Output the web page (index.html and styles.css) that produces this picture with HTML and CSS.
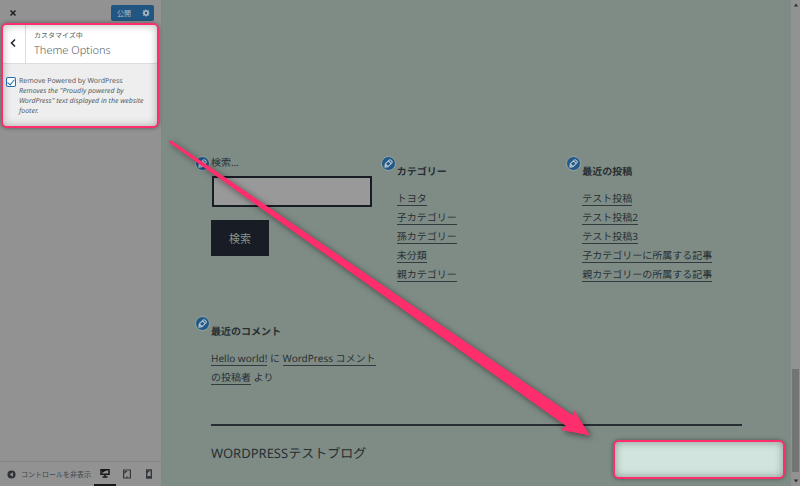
FILE: index.html
```html
<!DOCTYPE html>
<html lang="ja">
<head>
    <meta charset="UTF-8">
    <meta name="viewport" content="width=device-width, initial-scale=1.0">
    <title>カスタマイズ: WORDPRESSテストブログ</title>
    <link rel="stylesheet" href="styles.css">
</head>
<body>
    <svg class="symbols" aria-hidden="true">
        <symbol id="pencil" viewBox="0 0 20 20">
            <path fill="none" stroke="currentColor" stroke-width="2.500" stroke-linejoin="round" d="M2 18l1-7 9-9q2-1 4.500 1.500T18 8l-9 9zM10 4l6 6M3 11l6 6"/>
        </symbol>
    </svg>
    <div class="customizer">
        <aside class="sidebar">
            <header class="topbar">
                <button class="close" aria-label="閉じる">
                    <svg viewBox="0 0 8 8"><path d="M1.500 1.500l5 5M6.500 1.500l-5 5"/></svg>
                </button>
                <div class="publish">
                    <button class="save">公開</button>
                    <button class="settings" aria-label="公開設定">
                        <svg viewBox="0 0 20 20"><circle cx="10" cy="10" r="5" fill="none" stroke="currentColor" stroke-width="4"/><path fill="none" stroke="currentColor" stroke-width="3" d="M10 1v4M10 15v4M1 10h4M15 10h4M3.600 3.600l3 3M13.400 13.400l3 3M3.600 16.400l3-3M13.400 6.600l3-3"/></svg>
                    </button>
                </div>
            </header>
            <section class="options">
                <div class="options-head">
                    <button class="back" aria-label="戻る">
                        <svg viewBox="0 0 8 10"><path d="M6 1.500L2.500 5 6 8.500"/></svg>
                    </button>
                    <div class="options-title">
                        <span>カスタマイズ中</span>
                        <h1>Theme Options</h1>
                    </div>
                </div>
                <div class="control">
                    <input type="checkbox" id="remove-powered" checked>
                    <div>
                        <label for="remove-powered">Remove Powered by WordPress</label>
                        <p>Removes the "Proudly powered by WordPress" text displayed in the website footer.</p>
                    </div>
                </div>
            </section>
            <footer class="devices">
                <button class="collapse">
                    <svg viewBox="0 0 10 10"><circle cx="5" cy="5" r="4.500" fill="#30343a"/><path fill="#929292" d="M6.500 2.500v5L3 5z"/></svg>
                    <span>コントロールを非表示</span>
                </button>
                <button class="device active" aria-label="デスクトップ">
                    <svg viewBox="0 0 10 10"><path fill="none" stroke="currentColor" stroke-width="1.500" d="M1 1.700h8v4.600H1zM5 6v3M2.500 9h5"/><path fill="currentColor" d="M2 2h5L2 5z"/></svg>
                </button>
                <button class="device" aria-label="タブレット">
                    <svg viewBox="0 0 10 10"><path fill="none" stroke="currentColor" stroke-width="1.200" d="M1.600 1h6.800v8H1.600z"/><path fill="currentColor" d="M2.500 2h3l-3 3zM4.300 7.500h1.400v1.500H4.300z"/></svg>
                </button>
                <button class="device" aria-label="スマートフォン">
                    <svg viewBox="0 0 10 10"><path fill="none" stroke="currentColor" stroke-width="1.400" d="M2.700 1h4.600v8H2.700z"/><path fill="currentColor" d="M3 2h3L3 4.500zM3 7h4v2H3z"/></svg>
                </button>
            </footer>
        </aside>

        <main class="preview">
            <div class="widgets">
                <section class="widget">
                    <button class="edit" aria-label="編集"><svg><use href="#pencil"/></svg></button>
                    <form class="search">
                        <label for="s">検索…</label>
                        <input type="search" id="s">
                        <button type="button">検索</button>
                    </form>
                </section>
                <section class="widget">
                    <button class="edit" aria-label="編集"><svg><use href="#pencil"/></svg></button>
                    <h2>カテゴリー</h2>
                    <ul>
                        <li><a href="#">トヨタ</a></li>
                        <li><a href="#">子カテゴリー</a></li>
                        <li><a href="#">孫カテゴリー</a></li>
                        <li><a href="#">未分類</a></li>
                        <li><a href="#">親カテゴリー</a></li>
                    </ul>
                </section>
                <section class="widget">
                    <button class="edit" aria-label="編集"><svg><use href="#pencil"/></svg></button>
                    <h2>最近の投稿</h2>
                    <ul>
                        <li><a href="#">テスト投稿</a></li>
                        <li><a href="#">テスト投稿2</a></li>
                        <li><a href="#">テスト投稿3</a></li>
                        <li><a href="#">子カテゴリーに所属する記事</a></li>
                        <li><a href="#">親カテゴリーの所属する記事</a></li>
                    </ul>
                </section>
                <section class="widget">
                    <button class="edit" aria-label="編集"><svg><use href="#pencil"/></svg></button>
                    <h2>最近のコメント</h2>
                    <ul class="comments">
                        <li><a href="#">Hello world!</a> に <a href="#">WordPress コメントの投稿者</a> より</li>
                    </ul>
                </section>
            </div>
            <footer class="site-footer">WORDPRESSテストブログ</footer>
            <div class="marker"></div>
        </main>

        <div class="scrollbar">
            <svg viewBox="0 0 8 8"><path d="M4 2l3 4H1z"/></svg>
            <div class="thumb"></div>
            <svg viewBox="0 0 8 8"><path d="M4 6l3-4H1z"/></svg>
        </div>

        <svg class="arrow" viewBox="0 0 800 486" aria-hidden="true">
            <path d="M169 140.500L172 141 573 415.500 574 410 590 435.500 561 430 566 426 169 142.500z"/>
        </svg>
    </div>
</body>
</html>
```
FILE: styles.css
```css
* { box-sizing: border-box; }
body { margin: 0; font-family: "Noto Sans", "Noto Sans CJK JP", sans-serif; font-size: 10px; color: #282f33; text-rendering: geometricPrecision; }
button { border: 0; padding: 0; background: none; font: inherit; color: inherit; cursor: pointer; }
h1, h2, p, ul { margin: 0; padding: 0; }
.symbols { position: absolute; width: 0; height: 0; }
.customizer { position: relative; display: flex; height: 100vh; overflow: hidden; }

/* Sidebar */
.sidebar { flex: 0 0 162px; display: flex; flex-direction: column; background: #929292; border-right: 1px solid #858585; }
.topbar { display: flex; justify-content: space-between; height: 23px; padding: 5px 7px 0 0; }
.close { width: 26px; height: 16px; }
.close svg { width: 8px; height: 8px; }
.close path, .back path { fill: none; stroke: #1d2023; stroke-width: 1.5; }
.publish { display: flex; height: 16px; background: #215682; border-radius: 2px; color: #aab8c5; font-size: 7px; }
.save { width: 26px; }
.settings { display: flex; align-items: center; justify-content: center; width: 17px; }
.settings svg { width: 8px; height: 8px; }
.options { position: relative; height: 105px; margin: 0 2px 0 1px; background: #eee; border: 2px solid #fe2e6c; border-radius: 6px; overflow: hidden; box-shadow: 0 0 4px rgba(0, 0, 0, .4); }
.options::after { content: ""; position: absolute; inset: 0; box-shadow: inset 0 0 8px rgba(0, 0, 0, .3); pointer-events: none; }
.options-head { display: flex; height: 39px; background: #fff; border-bottom: 1px solid #ddd; }
.back { width: 23px; padding-right: 3px; border-right: 1px solid #ddd; }
.back svg { width: 8px; height: 10px; }
.options-title { padding: 5px 8px; color: #555d66; }
.options-title span { display: block; font-size: 7px; line-height: 13px; }
.options-title h1 { font-size: 11px; font-weight: 300; line-height: 16px; }
.control { display: flex; gap: 3px; padding: 13px 8px 0 3px; font-size: 7px; line-height: 10px; color: #555d66; }
.control input { appearance: none; flex: none; width: 8px; height: 8px; margin: 1px; border-radius: 1px; background: #fff; box-shadow: 0 0 0 1px #2271b1; }
.control input:checked::before { content: ""; display: block; width: 3px; height: 6px; margin: 0 auto; border: solid #2271b1; border-width: 0 1px 1px 0; transform: rotate(40deg); }
.control p { font-style: italic; }
.devices { display: flex; align-items: center; height: 25px; margin-top: auto; padding-left: 7px; border-top: 1px solid #858585; }
.collapse { display: flex; align-items: center; gap: 5px; width: 85px; margin-right: 2px; white-space: nowrap; font-size: 7px; color: #42474c; }
.collapse svg { flex: none; width: 9px; height: 9px; }
.device { display: flex; align-items: center; justify-content: center; width: 22px; height: 24px; color: #34393e; }
.device svg { width: 10px; height: 10px; }
.device.active { border-bottom: 2px solid #15181b; color: #15181b; }

/* Site preview */
.preview { position: relative; flex: 1; display: flex; flex-direction: column; justify-content: flex-end; padding: 0 49px; background: #7f8c86; }
.widgets { display: grid; grid-template-columns: repeat(3, 1fr); column-gap: 26px; row-gap: 30px; margin-bottom: 37px; }
.widget { position: relative; min-width: 0; line-height: 19px; }
.widget h2 { padding-top: 8px; margin-bottom: 8px; font-size: 10px; line-height: 19px; }
.widget ul { list-style: none; }
.widget .comments { margin-right: -10px; }
.widget a { color: inherit; text-decoration: none; border-bottom: 1px solid #343b3f; }
.edit { position: absolute; left: -16px; top: 2px; display: flex; align-items: center; justify-content: center; width: 15px; height: 15px; border: 1px solid #9ba5a1; border-radius: 50%; background: #215a88; color: #b5c3cc; }
.edit svg { width: 9px; height: 9px; }
.search { display: flex; flex-direction: column; align-items: flex-start; }
.search label { line-height: 16px; margin-bottom: 6px; }
.search input { width: 100%; height: 31px; margin: 0 0 13px 1px; border: 2px solid #181c25; border-radius: 0; background: #999; }
.search button { width: 58px; height: 36px; background: #181c25; color: #87938d; font-size: 11px; }
.site-footer { height: 62px; padding-top: 18px; border-top: 2px solid #282e33; font-size: 13px; line-height: 19px; }
.marker { position: absolute; right: 6px; bottom: 7px; width: 172px; height: 39px; border: 2px solid #fe2e6c; border-radius: 6px; background: #d1e4dd; box-shadow: 0 0 4px rgba(0, 0, 0, .4), inset 0 0 8px rgba(0, 0, 0, .35); }

.scrollbar { flex: 0 0 9px; display: flex; flex-direction: column; align-items: center; background: #929292; }
.scrollbar svg { width: 6px; height: 10px; fill: #333; }
.thumb { width: 7px; height: 103px; margin: auto 0 4px; background: #747474; }
.arrow { position: absolute; inset: 0; width: 100%; height: 100%; fill: #fe2e6c; filter: drop-shadow(2px 2px 3px rgba(0, 0, 0, .5)); pointer-events: none; }
```
